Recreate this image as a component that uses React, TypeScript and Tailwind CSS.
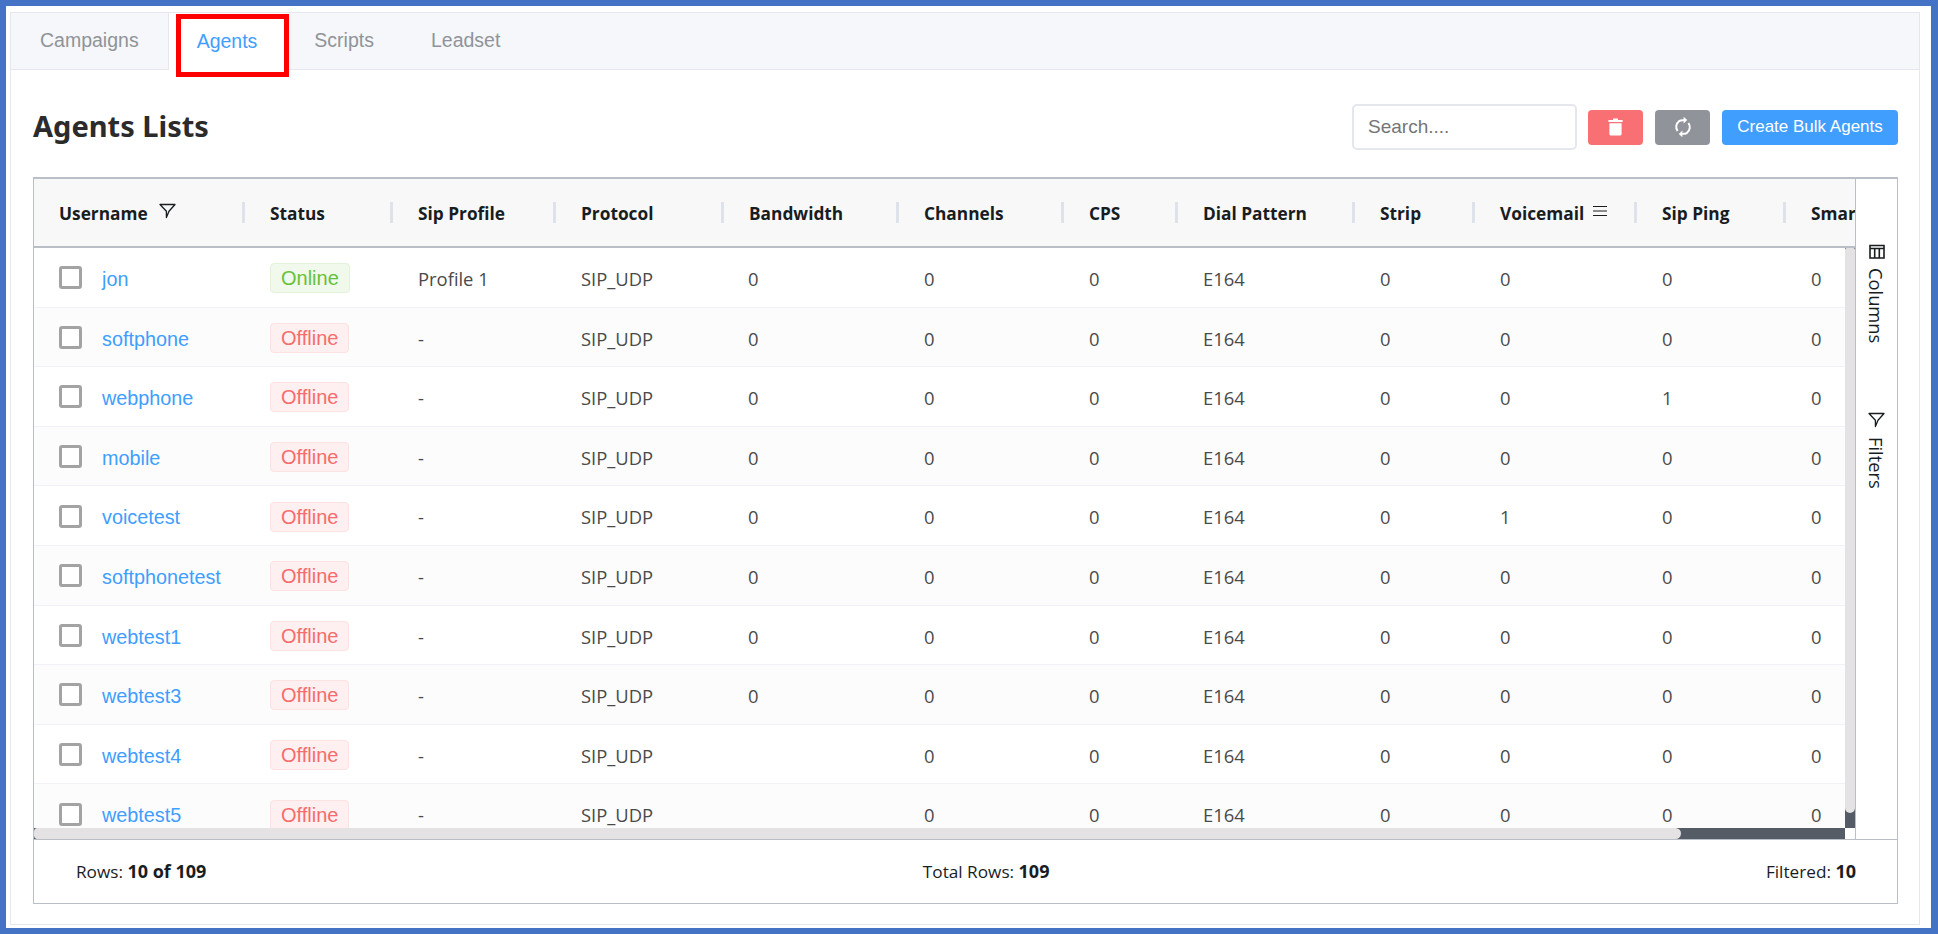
import React from 'react';

const COLS = 'grid grid-cols-[210px_148px_163px_168px_175px_165px_114px_177px_120px_162px_149px_160px]';

const HEADERS = ['Username', 'Status', 'Sip Profile', 'Protocol', 'Bandwidth', 'Channels', 'CPS', 'Dial Pattern', 'Strip', 'Voicemail', 'Sip Ping', 'Smart'];

interface Agent {
    name: string;
    online?: boolean;
    profile?: string;
    bandwidth?: string;
    voicemail?: string;
    ping?: string;
}

const AGENTS: Agent[] = [
    { name: 'jon', online: true, profile: 'Profile 1' },
    { name: 'softphone' },
    { name: 'webphone', ping: '1' },
    { name: 'mobile' },
    { name: 'voicetest', voicemail: '1' },
    { name: 'softphonetest' },
    { name: 'webtest1' },
    { name: 'webtest3' },
    { name: 'webtest4', bandwidth: '' },
    { name: 'webtest5', bandwidth: '' },
];

const FilterIcon = ({ className }: { className?: string }) => (
    <svg viewBox="0 0 17 16" fill="none" stroke="currentColor" strokeWidth="1.3" className={className}>
        <path d="M1 1.5h15L10 8.2 7.4 14.6V8.2z" strokeLinejoin="round" />
    </svg>
);

const App: React.FC = () => {
    return (
        <div className="w-[1938px] h-[934px] bg-[#4472c4] pl-[6px] pr-[7px] py-[6px] overflow-hidden font-['Open_Sans',sans-serif]">
            <div className="w-full h-full bg-white pl-[4px] pr-[11px] pt-[6px] pb-[3px]">
                <div className="h-full border border-[#e4e7ed]">
                    <div className="relative flex h-[57px] bg-[#f5f7fa] border-b border-[#e4e7ed] font-['Liberation_Sans',sans-serif] text-[19.5px] text-[#909399]">
                        <div className="flex items-center px-[29px] border-r border-[#e4e7ed]">Campaigns</div>
                        <div className="flex items-center px-[28px] h-[57px] bg-white text-[#409eff]">Agents</div>
                        <div className="flex items-center px-[29px]">Scripts</div>
                        <div className="flex items-center pl-[28px] pr-[29px]">Leadset</div>
                        <div className="absolute left-[165px] top-[1px] w-[113px] h-[63px] border-[5px] border-[#ff0000]" />
                    </div>

                    <div className="pl-[22px] pr-[21px] pt-[34px]">
                        <div className="flex items-center justify-between h-[46px]">
                            <h1 className="mb-[2px] text-[29px] font-bold text-[#2b2b2b] font-['Noto_Sans',sans-serif]">Agents Lists</h1>
                            <div className="flex items-center">
                                <input
                                    placeholder="Search...."
                                    className="w-[225px] h-[46px] px-[14px] bg-white border-2 border-[#e4e7ed] rounded-[5px] text-[19px] font-['Liberation_Sans',sans-serif] placeholder:text-[#757575]"
                                />
                                <button className="ml-[11px] w-[55px] h-[35px] rounded-[4px] bg-[#f87073] flex items-center justify-center">
                                    <svg viewBox="0 0 15 18" fill="white" className="w-[15px] h-[18px]">
                                        <path d="M5 0.5h5v1.4h4.6v2.2H0.4V1.9H5zM1.4 5.2h12.2V16a1.6 1.6 0 0 1-1.6 1.6H3A1.6 1.6 0 0 1 1.4 16z" />
                                    </svg>
                                </button>
                                <button className="ml-[12px] w-[55px] h-[35px] rounded-[4px] bg-[#909399] flex items-center justify-center">
                                    <svg viewBox="0 0 18 22" fill="none" stroke="white" strokeWidth="2" className="w-[18px] h-[22px]">
                                        <path d="M3.6 15A7 7 0 0 1 5 5.2C6.6 4.2 8.4 4 10 4.3" />
                                        <path d="M14.4 7A7 7 0 0 1 13 16.8C11.4 17.8 9.6 18 8 17.7" />
                                        <path d="M9.6 0.8v6.6l3.6-3.3zM8.4 14.6v6.6l-3.6-3.3z" fill="white" stroke="none" />
                                    </svg>
                                </button>
                                <button className="ml-[12px] w-[176px] h-[35px] rounded-[4px] bg-[#409eff] text-white text-[17px] font-['Liberation_Sans',sans-serif]">
                                    Create Bulk Agents
                                </button>
                            </div>
                        </div>

                        <div className="mt-[27px] h-[727px] border border-[#babfc7] border-t-2 flex flex-col">
                            <div className="flex h-[660px]">
                                <div className="w-[1821px] flex flex-col">
                                    <div className={`${COLS} h-[69px] shrink-0 overflow-hidden bg-[#f8f8f8] border-b-2 border-[#babfc7] text-[17.3px] font-bold text-[#181d1f]`}>
                                        {HEADERS.map((header, i) => (
                                            <div key={header} className="flex items-center whitespace-nowrap">
                                                {i > 0 && <span className="w-[3px] h-[21px] -ml-[2px] mr-[25px] bg-[#dde2eb]" />}
                                                <span className={i === 0 ? 'ml-[25px] mt-[3px]' : 'mt-[3px]'}>{header}</span>
                                                {header === 'Username' && <FilterIcon className="ml-[11px] mb-[3px] w-[17px] h-[16px] font-normal" />}
                                                {header === 'Voicemail' && (
                                                    <svg viewBox="0 0 16 12" fill="none" stroke="currentColor" strokeWidth="1.2" className="ml-[8px] mb-[3px] w-[16px] h-[12px]">
                                                        <path d="M1 1.5h14M1 6h14M1 10.5h14" />
                                                    </svg>
                                                )}
                                            </div>
                                        ))}
                                    </div>
                                    <div className="flex flex-1 min-h-0">
                                        <div className="w-[1811px] overflow-hidden">
                                            {AGENTS.map((agent, rowIndex) => (
                                                <div
                                                    key={agent.name}
                                                    className={`${COLS} h-[59.6px] border-b border-[#f0f2f7] text-[18.4px] text-[#4a4a4a] ${rowIndex % 2 === 1 ? 'bg-[#fcfcfc]' : 'bg-white'}`}
                                                >
                                                    <div className="flex items-center pl-[25px]">
                                                        <span className="w-[23px] h-[23px] mt-[1px] border-[3px] border-[#a3a3a3] rounded-[3px] bg-white" />
                                                        <a className="ml-[20px] mt-[5px] text-[19.8px] text-[#409eff] font-['Liberation_Sans',sans-serif]">{agent.name}</a>
                                                    </div>
                                                    <div className="flex items-center pl-[26px]">
                                                        <span
                                                            className={`h-[30px] mt-[2px] px-[10px] flex items-center rounded-[4px] border text-[20px] font-['Liberation_Sans',sans-serif] ${
                                                                agent.online
                                                                    ? 'bg-[#f0f9eb] border-[#e1f3d8] text-[#67c23a]'
                                                                    : 'bg-[#fef0f0] border-[#fde2e2] text-[#f56c6c]'
                                                            }`}
                                                        >
                                                            {agent.online ? 'Online' : 'Offline'}
                                                        </span>
                                                    </div>
                                                    <div className="flex items-center pl-[26px] pt-[3px]">{agent.profile ?? '-'}</div>
                                                    <div className="flex items-center pl-[26px] pt-[3px]">SIP_UDP</div>
                                                    <div className="flex items-center pl-[25px] pt-[3px]">{agent.bandwidth ?? '0'}</div>
                                                    <div className="flex items-center pl-[26px] pt-[3px]">0</div>
                                                    <div className="flex items-center pl-[26px] pt-[3px]">0</div>
                                                    <div className="flex items-center pl-[26px] pt-[3px]">E164</div>
                                                    <div className="flex items-center pl-[26px] pt-[3px]">0</div>
                                                    <div className="flex items-center pl-[26px] pt-[3px]">{agent.voicemail ?? '0'}</div>
                                                    <div className="flex items-center pl-[26px] pt-[3px]">{agent.ping ?? '0'}</div>
                                                    <div className="flex items-center pl-[26px] pt-[3px]">0</div>
                                                </div>
                                            ))}
                                        </div>
                                        <div className="w-[10px] bg-[#555c66]">
                                            <div className="h-[565px] bg-[#e4e2e3] rounded-t-[2px] rounded-b-[6px]" />
                                        </div>
                                    </div>
                                    <div className="flex h-[11px] shrink-0">
                                        <div className="w-[1811px] bg-[#555c66]">
                                            <div className="w-[1647px] h-full bg-[#e4e2e3] rounded-l-[4px] rounded-r-[6px]" />
                                        </div>
                                    </div>
                                </div>
                                <div className="flex-1 border-l border-[#babfc7] flex flex-col items-center pt-[65px] text-[#181d1f] text-[18.3px]">
                                    <div className="flex flex-col items-center">
                                        <svg viewBox="0 0 16 15" fill="none" stroke="currentColor" strokeWidth="1.6" className="w-[16px] h-[15px]">
                                            <path d="M1 1.5h14v12.5H1zM1 4.5h14M5.7 4.5V14M10.3 4.5V14" />
                                        </svg>
                                        <span className="mt-[9px] [writing-mode:vertical-rl]">Columns</span>
                                    </div>
                                    <div className="flex flex-col items-center mt-[69px]">
                                        <FilterIcon className="w-[17px] h-[16px]" />
                                        <span className="mt-[9px] [writing-mode:vertical-rl]">Filters</span>
                                    </div>
                                </div>
                            </div>
                            <div className="flex-1 border-t border-[#babfc7] flex items-center justify-between pl-[42px] pr-[41px] text-[17.2px] text-[#181d1f]">
                                <span>Rows: <b className="text-[18px]">10 of 109</b></span>
                                <span>Total Rows: <b className="text-[18px]">109</b></span>
                                <span>Filtered: <b className="text-[18px]">10</b></span>
                            </div>
                        </div>
                    </div>
                </div>
            </div>
        </div>
    );
};

export default App;
